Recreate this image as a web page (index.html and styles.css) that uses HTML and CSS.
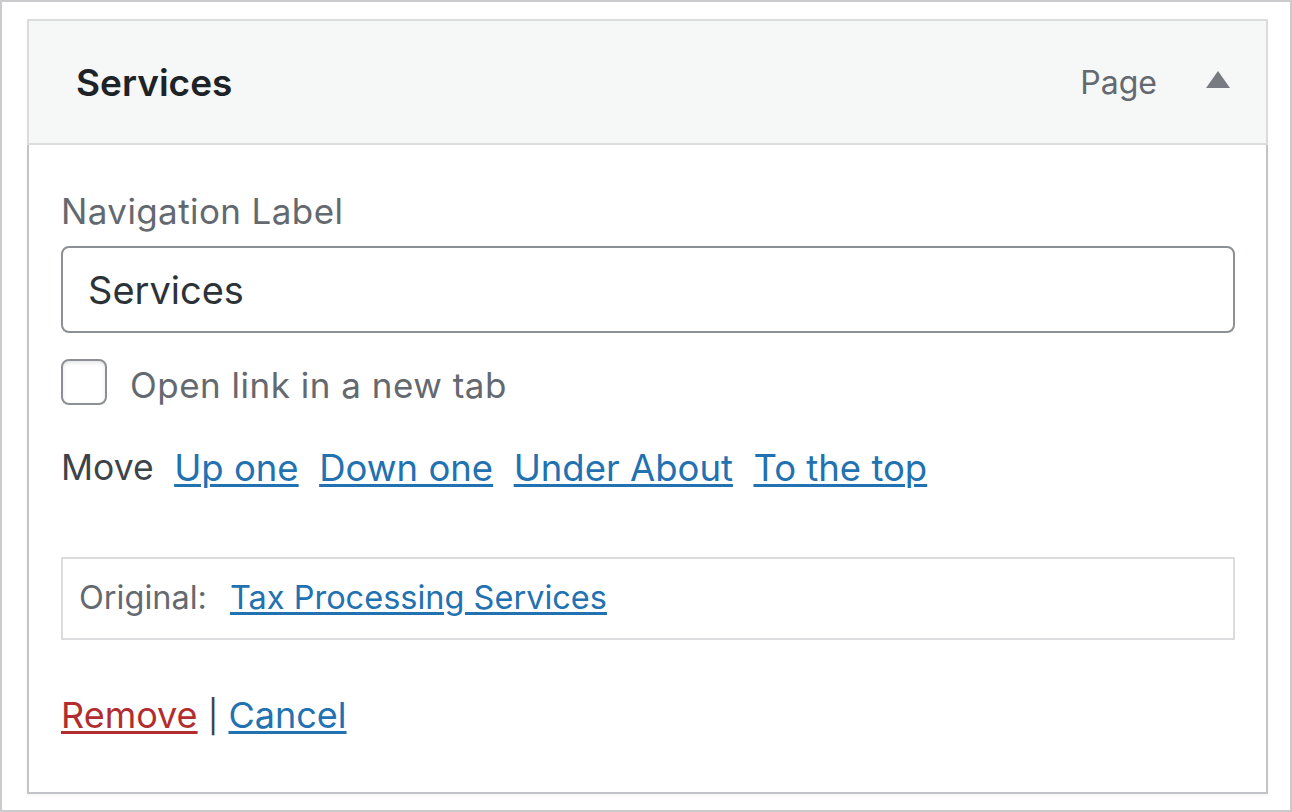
FILE: index.html
```html
<!DOCTYPE html>
<html lang="en">
<head>
  <meta charset="UTF-8">
  <title>Menu item – Services</title>
  <link rel="stylesheet" href="styles.css">
</head>
<body>
  <div class="frame">
    <div class="menu-item">
      <div class="item-bar">
        <span class="item-title">Services</span>
        <span class="item-controls">
          <span class="item-type">Page</span>
          <span class="toggle-arrow"></span>
        </span>
      </div>

      <div class="item-settings">
        <label class="field-label" for="navLabel">Navigation Label</label>
        <input class="field-input" type="text" id="navLabel" value="Services">

        <label class="check-row">
          <input type="checkbox" class="check">
          <span>Open link in a new tab</span>
        </label>

        <div class="move-row">
          <span class="move-label">Move</span>
          <a href="#">Up one</a>
          <a href="#">Down one</a>
          <a href="#">Under About</a>
          <a href="#">To the top</a>
        </div>

        <div class="original">
          <span>Original:</span>
          <a href="#">Tax Processing Services</a>
        </div>

        <div class="actions">
          <a href="#" class="remove">Remove</a>
          <span class="sep">|</span>
          <a href="#">Cancel</a>
        </div>
      </div>
    </div>
  </div>
</body>
</html>
```

FILE: styles.css
```css
:root {
  --text: #1d2327;
  --muted: #646970;
  --dark: #3c434a;
  --link: #2271b1;
  --red: #b32d2e;
  --line: #dcdcde;
  --edge: #c3c4c7;
}

* {
  box-sizing: border-box;
}

body {
  margin: 0;
  font-family: Inter, "Noto Sans", sans-serif;
  color: var(--text);
  background: #fff;
}

.frame {
  height: 812px;
  border: 2px solid #cbcbcd;
  padding: 17px 22px 17px 25px;
}

.menu-item {
  width: 1241px;
  box-shadow: 0 2px 2px rgba(0, 0, 0, 0.04);
}

.item-bar {
  height: 126px;
  display: flex;
  align-items: center;
  justify-content: space-between;
  background-color: #f6f7f7;
  border: 2px solid var(--line);
  padding: 0 36px 0 47px;
}

.item-title {
  font-size: 37px;
  font-weight: 600;
  color: var(--text);
}

.item-controls {
  display: flex;
  align-items: center;
  gap: 49px;
}

.item-type {
  font-size: 32px;
  color: var(--muted);
}

.toggle-arrow {
  width: 0;
  height: 0;
  border-left: 12px solid transparent;
  border-right: 12px solid transparent;
  border-bottom: 17px solid #787c82;
  margin-top: -6px;
}

.item-settings {
  border: 2px solid var(--edge);
  border-top: none;
  padding: 46px 31px 51px 32px;
}

.field-label {
  display: block;
  font-size: 35px;
  line-height: 40px;
  letter-spacing: 0.4px;
  color: var(--muted);
}

.field-input {
  display: block;
  width: 100%;
  height: 87px;
  margin-top: 15px;
  padding: 0 25px;
  border: 2px solid #8c8f94;
  border-radius: 8px;
  font-family: inherit;
  font-size: 38px;
  color: #2c3338;
  background: #fff;
  outline: none;
}

.check-row {
  display: flex;
  align-items: center;
  gap: 23px;
  margin-top: 25px;
  font-size: 35px;
  letter-spacing: 0.5px;
  color: var(--muted);
}

.check {
  appearance: none;
  -webkit-appearance: none;
  width: 46px;
  height: 46px;
  margin: 0;
  border: 2px solid #8c8f94;
  border-radius: 8px;
  background: #fff;
  box-shadow: inset 0 2px 4px rgba(0, 0, 0, 0.1);
}

.check-row span {
  padding-top: 6px;
}

.move-row {
  display: flex;
  gap: 20.5px;
  margin-top: 40px;
  font-size: 36.5px;
  line-height: 44px;
  color: var(--dark);
}

.move-label {
  font-size: 35.5px;
}

a {
  color: var(--link);
  text-decoration: underline;
  text-decoration-thickness: 3px;
  text-underline-offset: 3px;
}

.original {
  display: flex;
  align-items: center;
  gap: 23px;
  height: 83px;
  margin-top: 67px;
  padding: 0 16px 3px;
  border: 2px solid var(--line);
  font-size: 32.5px;
  color: var(--muted);
}

.actions {
  margin-top: 51px;
  font-size: 36px;
  line-height: 48px;
  color: var(--dark);
}

.actions .remove {
  color: var(--red);
}

.sep {
  font-size: 32px;
}
```
